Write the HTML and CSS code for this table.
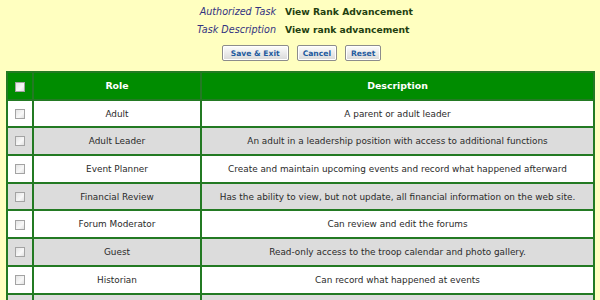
FILE: index.html
```html
<!DOCTYPE html>
<html lang="en">
<head>
    <meta charset="UTF-8">
    <title>Task Roles</title>
    <link rel="stylesheet" href="styles.css">
</head>
<body>
    <div class="task-info">
        <div class="info-row">
            <span class="info-label">Authorized Task</span>
            <span class="info-value">View Rank Advancement</span>
        </div>
        <div class="info-row">
            <span class="info-label">Task Description</span>
            <span class="info-value">View rank advancement</span>
        </div>
    </div>

    <div class="actions">
        <button class="btn btn-save">Save &amp; Exit</button>
        <button class="btn">Cancel</button>
        <button class="btn">Reset</button>
    </div>

    <table class="roles">
        <thead>
            <tr>
                <th class="check-col"><input type="checkbox"></th>
                <th class="role-col">Role</th>
                <th>Description</th>
            </tr>
        </thead>
        <tbody>
            <tr>
                <td><input type="checkbox"></td>
                <td>Adult</td>
                <td>A parent or adult leader</td>
            </tr>
            <tr>
                <td><input type="checkbox"></td>
                <td>Adult Leader</td>
                <td>An adult in a leadership position with access to additional functions</td>
            </tr>
            <tr>
                <td><input type="checkbox"></td>
                <td>Event Planner</td>
                <td>Create and maintain upcoming events and record what happened afterward</td>
            </tr>
            <tr>
                <td><input type="checkbox"></td>
                <td>Financial Review</td>
                <td>Has the ability to view, but not update, all financial information on the web site.</td>
            </tr>
            <tr>
                <td><input type="checkbox"></td>
                <td>Forum Moderator</td>
                <td>Can review and edit the forums</td>
            </tr>
            <tr>
                <td><input type="checkbox"></td>
                <td>Guest</td>
                <td>Read-only access to the troop calendar and photo gallery.</td>
            </tr>
            <tr>
                <td><input type="checkbox"></td>
                <td>Historian</td>
                <td>Can record what happened at events</td>
            </tr>
            <tr>
                <td><input type="checkbox"></td>
                <td></td>
                <td></td>
            </tr>
        </tbody>
    </table>
</body>
</html>
```

FILE: styles.css
```css
body {
    background: #ffffc0;
    font-family: 'DejaVu Sans', Verdana, sans-serif;
    margin: 0;
    padding: 4px 5px 0 6px;
}

.task-info {
    display: flex;
    flex-direction: column;
    gap: 4px;
}

.info-row {
    display: flex;
    gap: 9px;
    height: 14px;
    align-items: center;
}

.info-label {
    width: 270px;
    text-align: right;
    font-style: italic;
    font-size: 9.6px;
    color: #333380;
}

.info-value {
    font-weight: bold;
    font-size: 9.2px;
    color: #1f3f10;
}

.actions {
    display: flex;
    justify-content: center;
    gap: 8px;
    margin: 9px 0 10px 2px;
}

.btn {
    height: 16px;
    padding: 0 5px;
    font-family: inherit;
    font-size: 7.6px;
    font-weight: bold;
    color: #1f5b9e;
    background: linear-gradient(to bottom, #fdfdfd, #d8d8d8);
    border: 1px solid #8c8c8c;
    border-radius: 2px;
    box-shadow: inset 0 0 0 1px #fff;
}

.btn-save {
    padding: 0 8px;
}

.roles {
    width: 100%;
    border-collapse: collapse;
    border: 2px solid #237a23;
    font-size: 8.9px;
    color: #2a2a2a;
}

.roles th,
.roles td {
    border: 2px solid #237a23;
    text-align: center;
    padding: 0;
    height: 25.7px;
}

.roles th {
    background: #008c00;
    color: white;
    font-size: 9.4px;
}

.check-col {
    width: 24px;
}

.role-col {
    width: 166px;
}

.roles tbody tr:nth-child(odd) td {
    background: white;
}

.roles tbody tr:nth-child(even) td {
    background: #dcdcdc;
}

input[type="checkbox"] {
    appearance: none;
    width: 10px;
    height: 10px;
    margin: 0;
    vertical-align: middle;
    border: 1px solid #a3a3a3;
    background: linear-gradient(135deg, #e4e4e4, #f8f8f8 60%, #e0e0e0);
}
```
